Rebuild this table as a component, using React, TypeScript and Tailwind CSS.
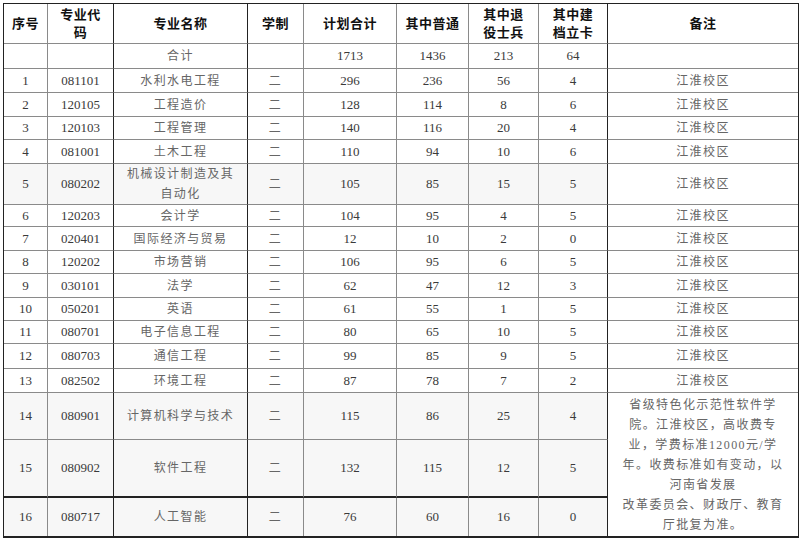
import React from "react";

type Row = {
  no: string;
  code: string;
  name: React.ReactNode;
  total: string;
  normal: string;
  veteran: string;
  poor: string;
  note?: string;
  h: string;
  shade?: boolean;
};

const rows: Row[] = [
  { no: "1", code: "081101", name: "水利水电工程", total: "296", normal: "236", veteran: "56", poor: "4", note: "江淮校区", h: "h-[24px]" },
  { no: "2", code: "120105", name: "工程造价", total: "128", normal: "114", veteran: "8", poor: "6", note: "江淮校区", h: "h-[24px]" },
  { no: "3", code: "120103", name: "工程管理", total: "140", normal: "116", veteran: "20", poor: "4", note: "江淮校区", h: "h-[23px]" },
  { no: "4", code: "081001", name: "土木工程", total: "110", normal: "94", veteran: "10", poor: "6", note: "江淮校区", h: "h-[24px]" },
  {
    no: "5",
    code: "080202",
    name: (
      <>
        机械设计制造及其
        <br />
        自动化
      </>
    ),
    total: "105",
    normal: "85",
    veteran: "15",
    poor: "5",
    note: "江淮校区",
    h: "h-[41px]",
    shade: true,
  },
  { no: "6", code: "120203", name: "会计学", total: "104", normal: "95", veteran: "4", poor: "5", note: "江淮校区", h: "h-[22px]" },
  { no: "7", code: "020401", name: "国际经济与贸易", total: "12", normal: "10", veteran: "2", poor: "0", note: "江淮校区", h: "h-[24px]" },
  { no: "8", code: "120202", name: "市场营销", total: "106", normal: "95", veteran: "6", poor: "5", note: "江淮校区", h: "h-[23px]" },
  { no: "9", code: "030101", name: "法学", total: "62", normal: "47", veteran: "12", poor: "3", note: "江淮校区", h: "h-[24px]" },
  { no: "10", code: "050201", name: "英语", total: "61", normal: "55", veteran: "1", poor: "5", note: "江淮校区", h: "h-[23px]" },
  { no: "11", code: "080701", name: "电子信息工程", total: "80", normal: "65", veteran: "10", poor: "5", note: "江淮校区", h: "h-[23px]" },
  { no: "12", code: "080703", name: "通信工程", total: "99", normal: "85", veteran: "9", poor: "5", note: "江淮校区", h: "h-[25px]" },
  { no: "13", code: "082502", name: "环境工程", total: "87", normal: "78", veteran: "7", poor: "2", note: "江淮校区", h: "h-[24px]" },
  { no: "14", code: "080901", name: "计算机科学与技术", total: "115", normal: "86", veteran: "25", poor: "4", h: "h-[47px]", shade: true },
  { no: "15", code: "080902", name: "软件工程", total: "132", normal: "115", veteran: "12", poor: "5", h: "h-[58px]", shade: true },
  { no: "16", code: "080717", name: "人工智能", total: "76", normal: "60", veteran: "16", poor: "0", h: "h-[38px]", shade: true },
];

const noteLines = [
  "省级特色化示范性软件学",
  "院。江淮校区，高收费专",
  "业，学费标准12000元/学",
  "年。收费标准如有变动，以",
  "河南省发展",
  "改革委员会、财政厅、教育",
  "厅批复为准。",
];

const font = "font-['Liberation_Serif','Noto_Sans_CJK_SC',serif]";
const cn = "text-[12px] tracking-[1.4px] text-[#666]";
const num = "text-[13px] text-[#3a3a3a]";
const cell = "p-0 text-center align-middle border-b border-r border-[#8a8a8a]";
const dark = "border-r-[#222]";

export default function App() {
  return (
    <div className={`min-h-[540px] w-[800px] bg-white pl-[3px] pt-[3px] ${font}`}>
      <table className="w-[794px] table-fixed border-separate border-spacing-0 border border-b-2 border-[#222]">
        <colgroup>
          <col className="w-[44px]" />
          <col className="w-[66px]" />
          <col className="w-[134px]" />
          <col className="w-[56px]" />
          <col className="w-[93px]" />
          <col className="w-[72px]" />
          <col className="w-[70px]" />
          <col className="w-[69px]" />
          <col className="w-[190px]" />
        </colgroup>
        <thead>
          <tr className="h-[40px] text-[13px] font-bold leading-[18px] tracking-[0.5px] text-[#111]">
            <th className={`${cell} font-bold`}>序号</th>
            <th className={`${cell} ${dark} font-bold`}>
              专业代
              <br />码
            </th>
            <th className={`${cell} ${dark} font-bold`}>专业名称</th>
            <th className={`${cell} font-bold`}>学制</th>
            <th className={`${cell} font-bold`}>计划合计</th>
            <th className={`${cell} font-bold`}>其中普通</th>
            <th className={`${cell} font-bold`}>
              其中退
              <br />
              役士兵
            </th>
            <th className={`${cell} ${dark} font-bold`}>
              其中建
              <br />
              档立卡
            </th>
            <th className={`${cell} border-r-0 font-bold`}>备注</th>
          </tr>
        </thead>
        <tbody>
          <tr className="h-[25px]">
            <td className={cell} />
            <td className={`${cell} ${dark}`} />
            <td className={`${cell} ${dark} ${cn}`}>合计</td>
            <td className={cell} />
            <td className={`${cell} ${num}`}>1713</td>
            <td className={`${cell} ${num}`}>1436</td>
            <td className={`${cell} ${num}`}>213</td>
            <td className={`${cell} ${dark} ${num}`}>64</td>
            <td className={`${cell} border-r-0`} />
          </tr>
          {rows.map((r) => {
            const last = r.no === "16";
            const bottom = r.no === "15" ? "border-b-2 border-b-[#222]" : last ? "border-b-0" : "";
            const bg = r.shade ? "bg-[#f7f7f7]" : "bg-white";
            return (
              <tr key={r.no} className={`${r.h} leading-[20px]`}>
                <td className={`${cell} ${bottom} ${bg} ${num}`}>{r.no}</td>
                <td className={`${cell} ${dark} ${bottom} ${bg} ${num}`}>{r.code}</td>
                <td className={`${cell} ${dark} ${bottom} ${bg} ${cn}`}>{r.name}</td>
                <td className={`${cell} ${bottom} ${bg} ${cn}`}>二</td>
                <td className={`${cell} ${bottom} ${bg} ${num}`}>{r.total}</td>
                <td className={`${cell} ${bottom} ${bg} ${num}`}>{r.normal}</td>
                <td className={`${cell} ${bottom} ${bg} ${num}`}>{r.veteran}</td>
                <td className={`${cell} ${dark} ${bottom} ${bg} ${num}`}>{r.poor}</td>
                {r.note ? (
                  <td className={`${cell} border-r-0 bg-white ${cn}`}>{r.note}</td>
                ) : r.no === "14" ? (
                  <td rowSpan={3} className={`${cell} border-r-0 border-b-0 bg-white ${cn}`}>
                    {noteLines.map((line) => (
                      <div key={line} className="whitespace-nowrap leading-[20px]">
                        {line}
                      </div>
                    ))}
                  </td>
                ) : null}
              </tr>
            );
          })}
        </tbody>
      </table>
    </div>
  );
}
